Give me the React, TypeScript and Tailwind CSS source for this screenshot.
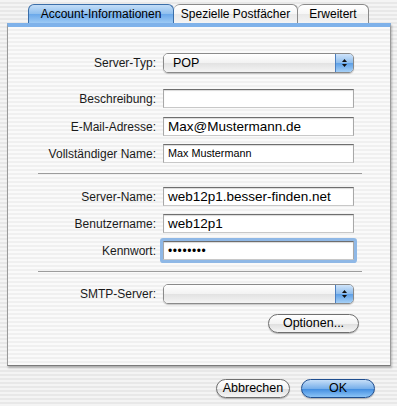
import React from "react";

const font = "font-['Liberation_Sans',Arial,sans-serif]";

function Label({ children }: { children: React.ReactNode }) {
  return (
    <div className="w-[155px] shrink-0 pr-[7px] text-right text-[12px] text-[#1a1a1a]">
      {children}
    </div>
  );
}

function Field({ value, size = "big", focused = false }: { value?: string; size?: "big" | "small" | "dots"; focused?: boolean }) {
  const textCls =
    size === "big"
      ? "text-[13.5px] leading-none text-black"
      : size === "small"
      ? "text-[10.8px] leading-none text-black"
      : "text-[12px] leading-none tracking-[0.6px] text-black";
  return (
    <div
      className={
        "flex h-[19px] w-[191px] items-center border border-t-[#6e6e6e] border-x-[#a8a8a8] border-b-[#c8c8c8] bg-white pl-[4px] shadow-[inset_0_1px_1px_rgba(0,0,0,0.15)] " +
        (focused ? "ring-[3px] ring-[#8fb8e6] rounded-[1px]" : "")
      }
    >
      <span className={textCls}>{value}</span>
    </div>
  );
}

function Popup({ value }: { value?: string }) {
  return (
    <div className="flex h-[20px] w-[191px] overflow-hidden rounded-[5px] border border-[#8a8a8a] shadow-[0_1px_1px_rgba(0,0,0,0.2)]">
      <div className="flex flex-1 items-center bg-[linear-gradient(#ffffff,#f2f2f2_50%,#e2e2e2_51%,#f4f4f4)] pl-[9px] text-[12.5px]">
        {value}
      </div>
      <div className="flex w-[18px] flex-col items-center justify-center gap-[2px] border-l border-[#4b7fc0] bg-[linear-gradient(#cfe4fa,#8dbcec_50%,#5d9fe6_51%,#a6d0f6)]">
        <svg width="5" height="3" viewBox="0 0 5 3"><path d="M2.5 0L5 3H0z" fill="#111" /></svg>
        <svg width="5" height="3" viewBox="0 0 5 3"><path d="M0 0h5L2.5 3z" fill="#111" /></svg>
      </div>
    </div>
  );
}

function Button({ children, width, primary = false }: { children: React.ReactNode; width: string; primary?: boolean }) {
  return (
    <div
      className={
        width +
        " flex h-[19px] items-center justify-center rounded-full border text-[12.5px] shadow-[0_1px_1px_rgba(0,0,0,0.25)] " +
        (primary
          ? "border-[#1f4e8f] bg-[linear-gradient(#c6def8,#79b0ea_50%,#3f8be0_51%,#8cc4f6)] text-black"
          : "border-[#6f6f6f] bg-[linear-gradient(#ffffff,#f3f3f3_50%,#dedede_51%,#f6f6f6)] text-black")
      }
    >
      {children}
    </div>
  );
}

function Row({ label, children, className = "" }: { label: string; children: React.ReactNode; className?: string }) {
  return (
    <div className={"flex items-center " + className}>
      <Label>{label}</Label>
      {children}
    </div>
  );
}

export default function App() {
  return (
    <div
      className={
        font +
        " h-[406px] w-[397px] overflow-hidden bg-[repeating-linear-gradient(180deg,#f4f4f4_0px,#f4f4f4_2px,#e8e8e8_2px,#e8e8e8_4px)]"
      }
    >
      {/* Tabs */}
      <div className="ml-[28px] mt-[4px] flex h-[19px] items-end text-[12px]">
        <div className="flex h-[19px] w-[146px] items-center justify-center rounded-t-[6px] border border-b-0 border-[#3b6ea8] bg-[linear-gradient(#c3ddf7,#8fbfee_50%,#6aa8ea_51%,#9dcaf4)] text-black">
          Account-Informationen
        </div>
        <div className="flex h-[19px] w-[124px] items-center justify-center rounded-t-[6px] border border-b-0 border-l-0 border-[#8a8a8a] bg-[linear-gradient(#ffffff,#f6f6f6_50%,#e8e8e8_51%,#f4f4f4)] text-black">
          Spezielle Postfächer
        </div>
        <div className="flex h-[19px] w-[71px] items-center justify-center rounded-t-[6px] border border-b-0 border-l-0 border-[#8a8a8a] bg-[linear-gradient(#ffffff,#f6f6f6_50%,#e8e8e8_51%,#f4f4f4)] text-black">
          Erweitert
        </div>
      </div>

      {/* Panel */}
      <div className="ml-[7px] w-[384px] border-x border-b border-t-[4px] border-x-[#9a9a9a] border-b-[#7a7a7a] border-t-[#7fb2ea] bg-[repeating-linear-gradient(180deg,#fafafa_0px,#fafafa_2px,#f0f0f0_2px,#f0f0f0_4px)] pb-[32px] pt-[26px] shadow-[1px_2px_2px_rgba(0,0,0,0.25)]">
        <Row label="Server-Typ:">
          <Popup value="POP" />
        </Row>
        <Row label="Beschreibung:" className="mt-[16px]">
          <Field />
        </Row>
        <Row label="E-Mail-Adresse:" className="mt-[9px]">
          <Field value="Max@Mustermann.de" />
        </Row>
        <Row label="Vollständiger Name:" className="mt-[8px]">
          <Field value="Max Mustermann" size="small" />
        </Row>

        <div className="ml-[30px] mt-[10px] h-px w-[324px] bg-[#9c9c9c]" />

        <Row label="Server-Name:" className="mt-[13px]">
          <Field value="web12p1.besser-finden.net" />
        </Row>
        <Row label="Benutzername:" className="mt-[8px]">
          <Field value="web12p1" />
        </Row>
        <Row label="Kennwort:" className="mt-[8px]">
          <Field value="••••••••" size="dots" focused />
        </Row>

        <div className="ml-[30px] mt-[11px] h-px w-[324px] bg-[#9c9c9c]" />

        <Row label="SMTP-Server:" className="mt-[12px]">
          <Popup />
        </Row>
        <div className="mt-[10px] flex justify-end pr-[31px]">
          <Button width="w-[91px]">Optionen...</Button>
        </div>
      </div>

      {/* Dialog buttons */}
      <div className="mt-[13px] flex justify-end gap-[11px] pr-[22px]">
        <Button width="w-[74px]">Abbrechen</Button>
        <Button width="w-[74px]" primary>
          OK
        </Button>
      </div>
    </div>
  );
}
